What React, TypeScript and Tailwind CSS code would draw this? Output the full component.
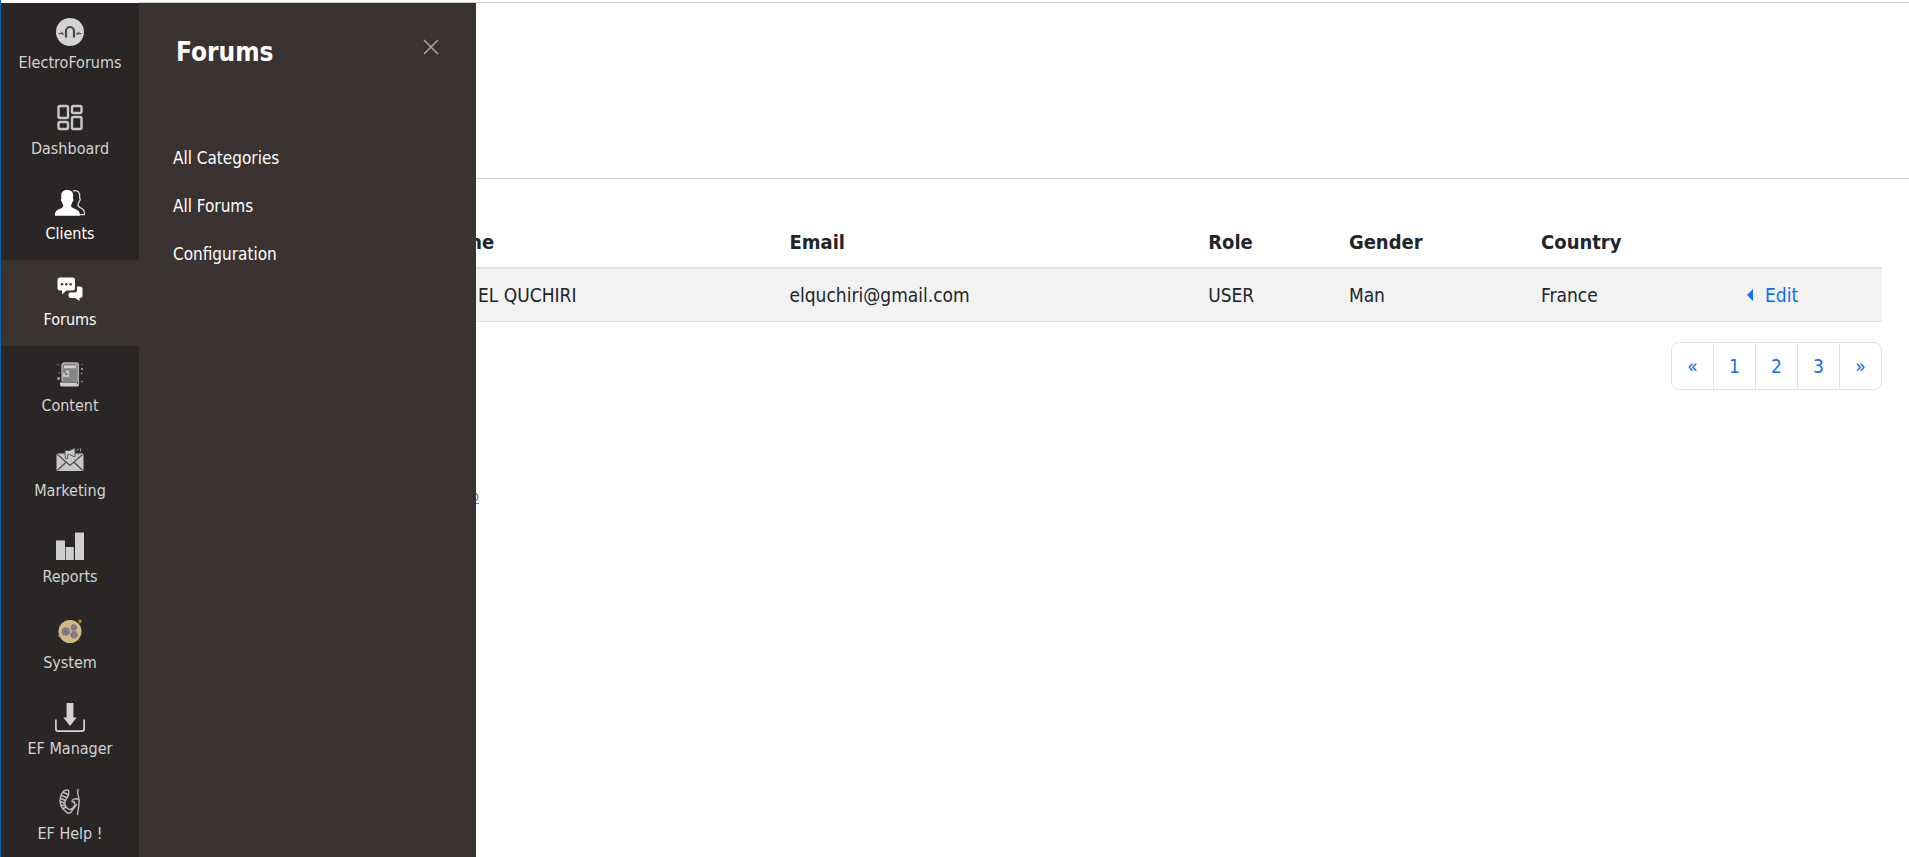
import { useState, type ReactNode } from "react";

const Svg = ({ children }: { children: ReactNode }) => (
  <svg viewBox="0 0 30 30" className="size-[30px] shrink-0" fill="none" aria-hidden="true">
    {children}
  </svg>
);

const LogoIcon = () => (
  <Svg>
    <circle cx="15" cy="15" r="14" fill="#d4d3d3" />
    <path d="M11 20.500v-6.500a4 4 0 0 1 8 0v6.500" stroke="#4a4747" strokeWidth="2.200" />
    <path d="M5 14.500 8.500 16v2.500zM25 14.500 21.500 16v2.500z" fill="#4a4747" />
    <path d="M3.500 16.500l4 .3M26.500 16.500l-4 .3" stroke="#4a4747" strokeWidth="1.200" />
  </Svg>
);

const DashboardIcon = () => (
  <Svg>
    <g stroke="#c9c8c8" strokeWidth="2.400">
      <rect x="3.500" y="3" width="9.500" height="12" rx="1.500" />
      <rect x="3.500" y="19" width="9.500" height="7" rx="1.500" />
      <rect x="17" y="3" width="9.500" height="7" rx="1.500" />
      <rect x="17" y="14" width="9.500" height="12" rx="1.500" />
    </g>
  </Svg>
);

const ClientsIcon = () => (
  <Svg>
    <path
      d="M18 3.200c1.500-1 5.500-.8 6.400 2.300.5 1.800.2 3.300.2 4.500 1 .5.700 2.500-.4 3.500-.4 1.500-1.200 2-1.200 3.200 0 2.300 2.200 3 4 3.900 2 1 2.600 2.400 2.600 6H25"
      stroke="#d6d5d5"
      strokeWidth="1.300"
    />
    <path
      d="M12 2c4.200 0 6.300 2.200 6.100 5.500l-.2 3c1 .5.700 2.700-.5 3.500-.4 1.600-1.300 2.300-1.300 3.800 0 1.600 1.600 2.200 4.100 3.200 3.500 1.400 4.600 2.500 4.800 6.800H0c0-4.300 1.100-5.400 4.600-6.800 2.500-1 3.600-1.600 3.600-3.200 0-1.500-.9-2.200-1.300-3.800-1.200-.8-1.500-3-.5-3.500l-.2-3C6 4.500 8 2 12 2z"
      fill="#fff"
    />
  </Svg>
);

const ForumsIcon = () => (
  <Svg>
    <path
      d="M5 3.500h12.500a2.500 2.500 0 0 1 2.500 2.500v8a2.500 2.500 0 0 1-2.500 2.500h-6L7 20.500v-4H5A2.500 2.500 0 0 1 2.500 14V6A2.500 2.500 0 0 1 5 3.500z"
      fill="#fff"
    />
    <path
      d="M22 12.500h3a2.500 2.500 0 0 1 2.500 2.500v6.500A2.500 2.500 0 0 1 25 24h-.5v3L20 24h-4a2.500 2.500 0 0 1-2.500-2.500V20l1-1.500h5a2.500 2.500 0 0 0 2.500-2.500z"
      fill="#fff"
    />
    <g fill="#3a3331">
      <circle cx="7" cy="10.300" r="1.200" />
      <circle cx="11.300" cy="10.300" r="1.200" />
      <circle cx="15.600" cy="10.300" r="1.200" />
    </g>
  </Svg>
);

const ContentIcon = () => (
  <Svg>
    <path d="M7 3h16v19H7z" fill="#858484" />
    <path d="M23.300 5v20.500M7 21V5.500A2.500 2.500 0 0 1 9.500 3H21c2 0 2.500 1 2.500 2.500" stroke="#b8b7b7" strokeWidth="1.300" />
    <path d="M9 5.500h12v2.700H9z" fill="#d0cfcf" />
    <path d="M8 13h3v-2.500h3V17H8z" fill="#c4c3c3" />
    <path d="M10.500 13.300h1.800v1.800h-1.800z" fill="#555" />
    <path d="M5 22.500h17v1.700l2 .3c0 1.500-1 2-2 2H6.500C5 26.500 5 24.500 5 22.500z" fill="#cfcece" />
    <g fill="#aaa9a9">
      <circle cx="3.500" cy="18.500" r="1.400" />
      <circle cx="27" cy="9" r="1.100" />
      <circle cx="26.500" cy="13.500" r=".7" />
      <circle cx="3" cy="4.500" r=".7" />
      <circle cx="27" cy="4.500" r=".6" />
      <circle cx="27" cy="21.500" r=".8" />
      <circle cx="4" cy="13" r=".7" />
    </g>
  </Svg>
);

const MarketingIcon = () => (
  <Svg>
    <rect x="1.500" y="8.500" width="27" height="17.500" rx="1.500" fill="#c9c8c8" />
    <path d="M2.500 9.500 15 20.500l12.500-11M2.500 25.300l9-8.500M27.500 25.300l-9-8.500" stroke="#4f4c4c" strokeWidth="1.300" />
    <path d="M10 5.500h4.500L20 3v9l-5.500-2.500H13l-.5 4h-2L10 9.500z" fill="#c9c8c8" stroke="#4f4c4c" strokeWidth=".9" />
    <path d="M22 5.500l1.500-2M22 9.500h2M25.500 3.500v3M26 9.500l1.300-1.500" stroke="#9b9999" strokeWidth="1.200" />
  </Svg>
);

const ReportsIcon = () => (
  <Svg>
    <path d="M1 9.500h9V29H1zM10.700 16h8.100v13h-8.100zM20 1.500h9V29h-9z" fill="#d0cfcf" />
  </Svg>
);

const SystemIcon = () => (
  <Svg>
    <circle cx="15" cy="14.500" r="11.500" fill="#d2b886" />
    <g stroke="#776d86" strokeWidth="1.800" fill="#877d90" strokeDasharray="1.600 .7">
      <circle cx="10.800" cy="14.500" r="3.500" />
      <circle cx="18.700" cy="10.500" r="2.500" />
      <circle cx="19" cy="17.800" r="2.900" />
    </g>
    <circle cx="10.800" cy="14.500" r="1.200" fill="#655d75" />
    <path d="M25 2.300l.7 1.200 1.300.5-1.200.8L25 6.300l-.9-1.500L23 4l1.300-.5z" fill="#b78a19" stroke="#b78a19" strokeWidth=".7" />
    <circle cx="4.300" cy="19" r="1" fill="#c08c45" />
    <circle cx="4.500" cy="8" r=".8" fill="#613238" />
    <circle cx="8" cy="26" r=".8" fill="#613238" />
    <circle cx="24" cy="23" r=".7" fill="#6a6035" />
  </Svg>
);

const ManagerIcon = () => (
  <Svg>
    <path d="M11.600 0h6.800v14.500h3.300L15 23 8.300 14.500h3.300z" fill="#d4d3d3" />
    <path d="M.9 16.500v9.600a2 2 0 0 0 2 2h24.200a2 2 0 0 0 2-2v-9.600" stroke="#d4d3d3" strokeWidth="1.700" />
  </Svg>
);

const HelpIcon = () => (
  <Svg>
    <g stroke="#bcbbbb" strokeWidth="1.400" strokeLinecap="round" strokeLinejoin="round">
      <path d="M12.500 2C9 1.500 6 5 5.300 10c-.6 4 .2 8 2.700 11l4 3.500M13.500 2.500c1 3-.7 6.500-2.500 9-1.500 2-1.500 4.500-.3 6.500" />
      <path d="M8.500 4.500l4.500 2M6.500 7.500l5.300 2M5.700 10.500l4.800 2M5.500 13.500l4.300 2M6.200 17l4 .8M8 20.500l3.200-1.500" />
      <path d="M23 1.500c-1.500 3.500.5 6 1 9.500.7 5-.8 9.500-1.500 15.500" />
      <path d="M23.500 11.500c-2-1-4.500-.8-6 .7-1.400 1.400.3 2.600 2 1.700 1.200 3-1 6.500-4 7.500-1.500.5-3.500-1-4.500-2.500M12 24.500c1.500 1.500 3.500.5 4.500-1 1.500-2.500 3.500-4 5-7" />
    </g>
  </Svg>
);

const navItems = [
  { label: "ElectroForums", Icon: LogoIcon, bright: false },
  { label: "Dashboard", Icon: DashboardIcon, bright: false },
  { label: "Clients", Icon: ClientsIcon, bright: true },
  { label: "Forums", Icon: ForumsIcon, bright: true },
  { label: "Content", Icon: ContentIcon, bright: false },
  { label: "Marketing", Icon: MarketingIcon, bright: false },
  { label: "Reports", Icon: ReportsIcon, bright: false },
  { label: "System", Icon: SystemIcon, bright: false },
  { label: "EF Manager", Icon: ManagerIcon, bright: false },
  { label: "EF Help !", Icon: HelpIcon, bright: false },
];

const submenu = ["All Categories", "All Forums", "Configuration"];
const pages = ["«", "1", "2", "3", "»"];

function Sidebar() {
  return (
    <nav className="grid h-screen w-[138px] shrink-0 grid-rows-10 bg-[#2a2626]">
      {navItems.map(({ label, Icon, bright }) => (
        <a
          key={label}
          href="#"
          className={`flex flex-col items-center gap-1 pt-3.5 text-base leading-6 whitespace-nowrap ${
            bright ? "text-white" : "text-[#d4d3d3]"
          } ${label === "Forums" ? "bg-[#3a3331]" : ""}`}
        >
          <Icon />
          {label}
        </a>
      ))}
    </nav>
  );
}

function Submenu({ onClose }: { onClose: () => void }) {
  return (
    <aside className="absolute top-0 bottom-0 left-full w-[337px] border-b-2 border-[#342b30] bg-[#3a3331] text-white">
      <div className="flex items-start justify-between pt-8 pr-[33px] pl-[37px]">
        <h2 className="text-[26px] leading-[34px] font-bold">Forums</h2>
        <button type="button" aria-label="Close" onClick={onClose} className="p-1">
          <svg viewBox="0 0 16 16" className="size-4" aria-hidden="true">
            <path d="M1 1l14 14M15 1L1 15" stroke="#aaa6a4" strokeWidth="1.500" fill="none" />
          </svg>
        </button>
      </div>
      <ul className="mt-[65px] flex flex-col pl-[34px]">
        {submenu.map((item) => (
          <li key={item}>
            <a href="#" className="block text-[17px] leading-[48px]">
              {item}
            </a>
          </li>
        ))}
      </ul>
    </aside>
  );
}

export default function App() {
  const [open, setOpen] = useState(true);
  return (
    <div className="flex h-screen overflow-hidden border-l border-[#0563b0] bg-white font-['DejaVu_Sans_Condensed','DejaVu_Sans',sans-serif] text-[#212529]">
      <div className="mt-[3px] flex grow">
        <div className="relative z-10 shrink-0 self-start">
          <Sidebar />
          {open && <Submenu onClose={() => setOpen(false)} />}
        </div>
        <main className="-mt-px min-w-0 grow border-t border-[#ccc]">
          <header className="h-44 border-b border-[#ccc]" />
          <div className="px-[27px] pt-9">
            <table className="w-full table-fixed text-left text-[19px] leading-7">
              <colgroup>
                <col className="w-[270px]" />
                <col className="w-[20.600%]" />
                <col className="w-[24.400%]" />
                <col className="w-[8.200%]" />
                <col className="w-[11.200%]" />
                <col className="w-[12%]" />
                <col />
              </colgroup>
              <thead>
                <tr className="border-b-2 border-[#dee2e6] text-xl leading-7 [&>th]:pt-[13px] [&>th]:pb-[11px]">
                  <td />
                  <th scope="col">Name</th>
                  <th scope="col">Email</th>
                  <th scope="col">Role</th>
                  <th scope="col">Gender</th>
                  <th scope="col">Country</th>
                  <td />
                </tr>
              </thead>
              <tbody>
                <tr className="border-b border-[#dee2e6] bg-[#f2f2f2] [&>td]:py-3">
                  <td />
                  <td className="pl-[42px]">EL QUCHIRI</td>
                  <td>elquchiri@gmail.com</td>
                  <td>USER</td>
                  <td>Man</td>
                  <td>France</td>
                  <td>
                    <a href="#" className="flex items-center gap-3 text-[#0d6efd]">
                      <svg viewBox="0 0 6 12" className="h-3 w-1.5" aria-hidden="true">
                        <path d="M6 0v12L0 6z" fill="currentColor" />
                      </svg>
                      Edit
                    </a>
                  </td>
                </tr>
              </tbody>
            </table>
            <div className="mt-5 flex justify-end">
              <ul className="flex divide-x divide-[#dee2e6] rounded-lg border border-[#dee2e6] text-[19px] leading-[46px] text-[#0d6efd]">
                {pages.map((page) => (
                  <li key={page}>
                    <a href="#" className="block w-[41px] text-center">
                      {page}
                    </a>
                  </li>
                ))}
              </ul>
            </div>
            <footer className="mt-[94px] w-[313px] text-right text-sm leading-6 text-[#6c757d]">
              <a href="#" className="underline underline-offset-2">
                Help
              </a>
            </footer>
          </div>
        </main>
      </div>
    </div>
  );
}
